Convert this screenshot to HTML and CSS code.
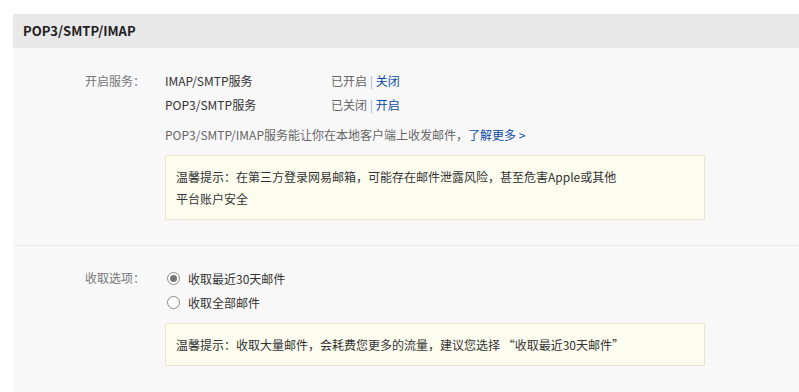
FILE: index.html
```html
<!DOCTYPE html>
<html lang="zh-CN">
<head>
    <meta charset="UTF-8">
    <meta name="viewport" content="width=device-width, initial-scale=1.0">
    <title>POP3/SMTP/IMAP 设置</title>
    <link rel="stylesheet" href="styles.css">
</head>
<body>
    <div class="panel">
        <div class="panel-head">POP3/SMTP/IMAP</div>

        <div class="section">
            <div class="label">开启服务：</div>
            <div class="content">
                <div class="service">
                    <span class="name">IMAP/SMTP服务</span>
                    <span class="state">已开启 <span class="sep">|</span> <a href="#">关闭</a></span>
                </div>
                <div class="service">
                    <span class="name">POP3/SMTP服务</span>
                    <span class="state">已关闭 <span class="sep">|</span> <a href="#">开启</a></span>
                </div>
                <p class="desc">POP3/SMTP/IMAP服务能让你在本地客户端上收发邮件，<a href="#">了解更多 &gt;</a></p>
                <div class="tip">温馨提示：在第三方登录网易邮箱，可能存在邮件泄露风险，甚至危害Apple或其他<br>平台账户安全</div>
            </div>
        </div>

        <div class="section">
            <div class="label">收取选项：</div>
            <div class="content">
                <label class="option"><span class="radio checked"></span>收取最近30天邮件</label>
                <label class="option"><span class="radio"></span>收取全部邮件</label>
                <div class="tip">温馨提示：收取大量邮件，会耗费您更多的流量，建议您选择 “收取最近30天邮件”</div>
            </div>
        </div>
    </div>
</body>
</html>
```

FILE: styles.css
```css
body {
    margin: 0;
    background: #fff;
    font-family: "Noto Sans CJK SC", "Noto Sans", sans-serif;
    font-size: 12px;
    color: #333;
}
.panel {
    margin: 14px 0 0 13px;
    background: #f8f8f8;
    min-height: 378px;
}
.panel-head {
    height: 34px;
    line-height: 34px;
    padding-left: 10px;
    background: #e8e8e8;
    font-size: 13px;
    font-weight: bold;
    color: #222;
}
.section {
    display: flex;
    gap: 20px;
    padding: 21px 0 25px;
    border-bottom: 1px solid #ebebeb;
}
.section + .section {
    border-bottom: none;
    padding-top: 20px;
}
.label {
    width: 132px;
    text-align: right;
    line-height: 24px;
    color: #777;
}
.content {
    width: 540px;
}
.service {
    display: flex;
    line-height: 24px;
}
.name {
    width: 166px;
}
.state {
    color: #666;
}
.sep {
    color: #8fb6e2;
}
a {
    color: #0b4aa6;
    text-decoration: none;
}
.desc {
    margin: 6px 0 0;
    line-height: 24px;
    color: #666;
}
.tip {
    margin-top: 8px;
    padding: 10px 10px 9px;
    line-height: 22px;
    background: #fdfdef;
    border: 1px solid #e7e7cf;
}
.option {
    display: flex;
    align-items: center;
    gap: 8px;
    height: 24px;
    padding-left: 2px;
}
.option + .tip {
    margin-top: 9px;
}
.radio {
    width: 11px;
    height: 11px;
    border: 1px solid #888;
    border-radius: 50%;
    background: #fff;
    display: flex;
    align-items: center;
    justify-content: center;
}
.radio.checked::after {
    content: "";
    width: 7px;
    height: 7px;
    border-radius: 50%;
    background: #777;
}
```
